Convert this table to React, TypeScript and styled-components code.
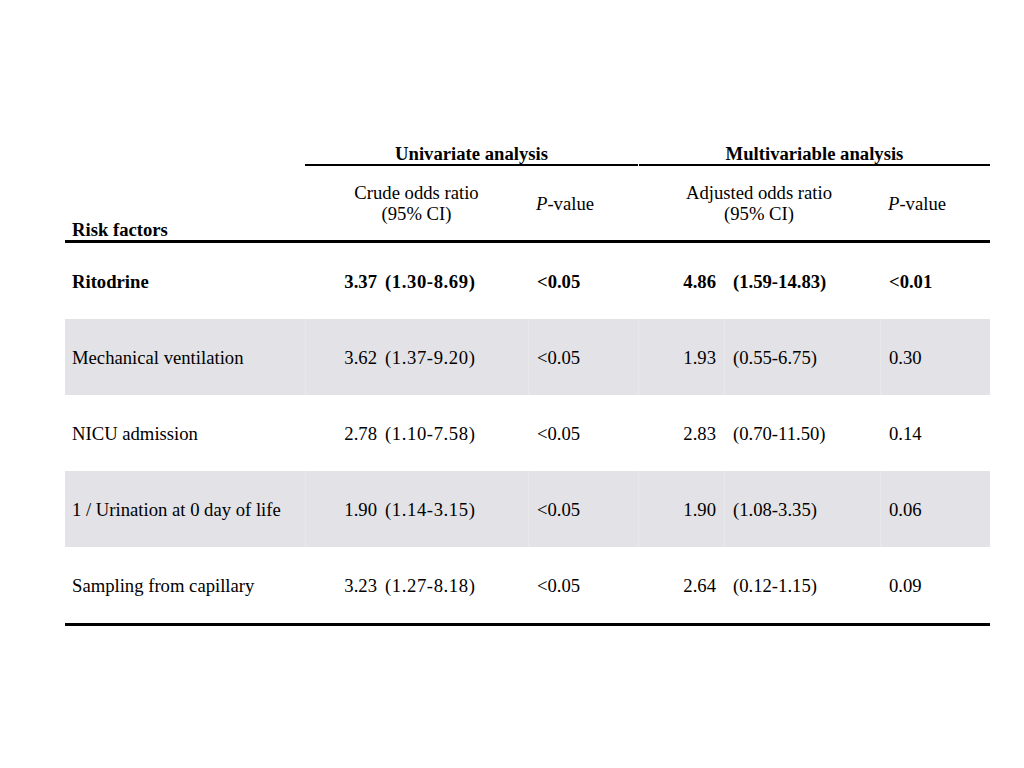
import React from "react";
import styled, { createGlobalStyle } from "styled-components";

const GlobalStyle = createGlobalStyle`
  html, body {
    margin: 0;
    padding: 0;
    background: #ffffff;
  }
  body {
    font-family: "Liberation Serif", "Times New Roman", serif;
    color: #000;
  }
`;

const COLS = "240px 75px 148px 110px 86px 156px 110px";

const Page = styled.div`
  width: 1024px;
  height: 768px;
  box-sizing: border-box;
  padding: 143px 34px 0 65px;
  background: #fff;
`;

const Table = styled.div`
  width: 925px;
  font-size: 18.67px;
  line-height: 21px;
  border-bottom: 3px solid #000;
`;

const Header = styled.div`
  display: grid;
  grid-template-columns: ${COLS};
  grid-template-rows: 23px 74px;
  border-bottom: 3px solid #000;
`;

const RiskHead = styled.div`
  grid-column: 1 / 2;
  grid-row: 1 / 3;
  align-self: end;
  padding-left: 7px;
  font-weight: bold;
`;

const GroupHead = styled.div<{ $start: number; $end: number; $gapLeft?: boolean }>`
  grid-column: ${(p) => p.$start} / ${(p) => p.$end};
  grid-row: 1 / 2;
  text-align: center;
  font-weight: bold;
  border-bottom: 2px solid #000;
  margin-left: ${(p) => (p.$gapLeft ? "1px" : "0")};
`;

const SubHead = styled.div<{ $start: number; $end: number; $center?: boolean }>`
  grid-column: ${(p) => p.$start} / ${(p) => p.$end};
  grid-row: 2 / 3;
  display: flex;
  align-items: center;
  justify-content: ${(p) => (p.$center ? "center" : "flex-start")};
  text-align: ${(p) => (p.$center ? "center" : "left")};
  padding-left: ${(p) => (p.$center ? "0" : "8px")};
`;

const Row = styled.div<{ $shaded?: boolean; $bold?: boolean }>`
  display: grid;
  grid-template-columns: ${COLS};
  height: 76px;
  background: ${(p) => (p.$shaded ? "#e3e3e7" : "#ffffff")};
  font-weight: ${(p) => (p.$bold ? "bold" : "normal")};
`;

const Cell = styled.div<{
  $align?: "left" | "right";
  $pl?: number;
  $pr?: number;
  $divider?: boolean;
  $shaded?: boolean;
  $spread?: boolean;
}>`
  display: flex;
  align-items: center;
  justify-content: ${(p) => (p.$align === "right" ? "flex-end" : "flex-start")};
  padding-left: ${(p) => p.$pl ?? 0}px;
  padding-right: ${(p) => p.$pr ?? 0}px;
  white-space: nowrap;
  letter-spacing: ${(p) => (p.$spread ? "0.6px" : "0")};
  border-left: ${(p) =>
    p.$divider ? `1px solid ${p.$shaded ? "#e8e8eb" : "transparent"}` : "none"};
`;

const I = styled.i`
  font-style: italic;
`;

type Data = {
  name: string;
  crude: string;
  crudeCi: string;
  p1: string;
  adj: string;
  adjCi: string;
  p2: string;
  bold?: boolean;
};

const rows: Data[] = [
  { name: "Ritodrine", crude: "3.37", crudeCi: "(1.30-8.69)", p1: "<0.05", adj: "4.86", adjCi: "(1.59-14.83)", p2: "<0.01", bold: true },
  { name: "Mechanical ventilation", crude: "3.62", crudeCi: "(1.37-9.20)", p1: "<0.05", adj: "1.93", adjCi: "(0.55-6.75)", p2: "0.30" },
  { name: "NICU admission", crude: "2.78", crudeCi: "(1.10-7.58)", p1: "<0.05", adj: "2.83", adjCi: "(0.70-11.50)", p2: "0.14" },
  { name: "1 / Urination at 0 day of life", crude: "1.90", crudeCi: "(1.14-3.15)", p1: "<0.05", adj: "1.90", adjCi: "(1.08-3.35)", p2: "0.06" },
  { name: "Sampling from capillary", crude: "3.23", crudeCi: "(1.27-8.18)", p1: "<0.05", adj: "2.64", adjCi: "(0.12-1.15)", p2: "0.09" },
];

export default function App() {
  return (
    <>
      <GlobalStyle />
      <Page>
        <Table>
          <Header>
            <RiskHead>Risk factors</RiskHead>
            <GroupHead $start={2} $end={5}>Univariate analysis</GroupHead>
            <GroupHead $start={5} $end={8} $gapLeft>Multivariable analysis</GroupHead>
            <SubHead $start={2} $end={4} $center>
              Crude odds ratio
              <br />
              (95% CI)
            </SubHead>
            <SubHead $start={4} $end={5}>
              <span>
                <I>P</I>-value
              </span>
            </SubHead>
            <SubHead $start={5} $end={7} $center>
              Adjusted odds ratio
              <br />
              (95% CI)
            </SubHead>
            <SubHead $start={7} $end={8}>
              <span>
                <I>P</I>-value
              </span>
            </SubHead>
          </Header>
          {rows.map((r, i) => {
            const shaded = i % 2 === 1;
            return (
              <Row key={r.name} $shaded={shaded} $bold={r.bold}>
                <Cell $pl={7}>{r.name}</Cell>
                <Cell $align="right" $pr={3} $divider $shaded={shaded}>{r.crude}</Cell>
                <Cell $pl={5} $spread>{r.crudeCi}</Cell>
                <Cell $pl={8} $divider $shaded={shaded}>{r.p1}</Cell>
                <Cell $align="right" $pr={8} $divider $shaded={shaded}>{r.adj}</Cell>
                <Cell $pl={8} $divider $shaded={shaded}>{r.adjCi}</Cell>
                <Cell $pl={8} $divider $shaded={shaded}>{r.p2}</Cell>
              </Row>
            );
          })}
        </Table>
      </Page>
    </>
  );
}
